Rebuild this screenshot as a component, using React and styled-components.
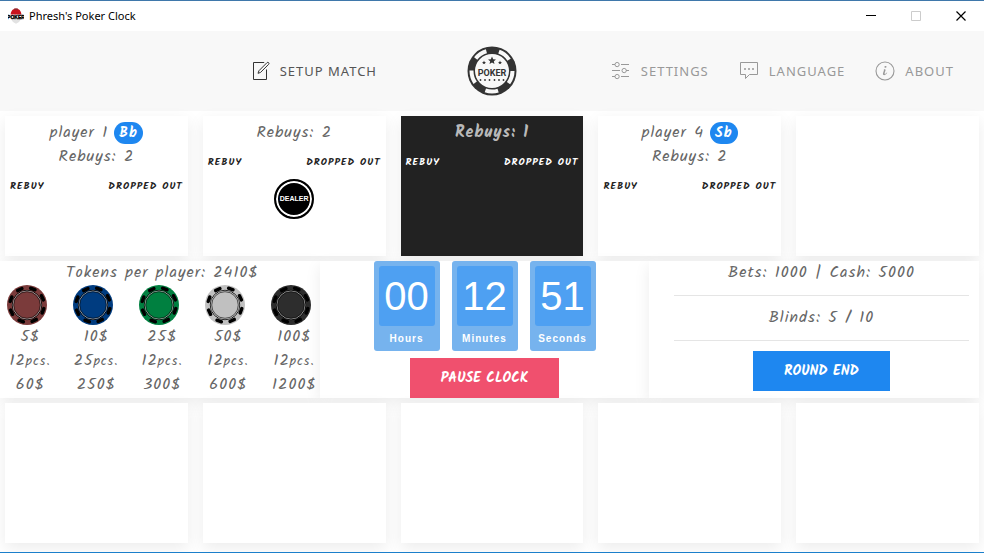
import React from "react";
import styled, { createGlobalStyle, css } from "styled-components";

const script = `Kalam, Lato, "Open Sans", sans-serif`;
const sans = `"Liberation Sans", Arial, sans-serif`;
const ui = `"Segoe UI", "Noto Sans", "Open Sans", sans-serif`;

const GlobalStyle = createGlobalStyle`
  *, *::before, *::after { box-sizing: border-box; }
  body { margin: 0; background: #fff; overflow-x: hidden; }
  button { border: 0; padding: 0; margin: 0; background: none; cursor: pointer; }
`;

const Window = styled.div`
  min-height: 100vh;
  display: flex;
  flex-direction: column;
  border-top: 1px solid #3f78ab;
  border-bottom: 1px solid #1b7fcb;
  background: #fff;
  overflow: hidden;
`;

const TitleBar = styled.header`
  display: flex;
  align-items: center;
  height: 30px;
  padding-left: 8px;
  background: #fff;
`;

const WindowTitle = styled.h1`
  flex: 1;
  margin: 0 0 0 5px;
  font: 400 11px/16px ${ui};
  color: #000;
`;

const WindowButton = styled.button`
  width: 45px;
  height: 30px;
  display: grid;
  place-items: center;
  color: ${(p) => (p.disabled ? "#ccc" : "#000")};
`;

const NavBar = styled.nav`
  display: grid;
  grid-template-columns: 1fr auto 1fr;
  align-items: center;
  height: 80px;
  background: #f8f8f8;
`;

const NavGroup = styled.div`
  display: flex;
  justify-content: flex-end;
  gap: 30px;
  padding-right: ${(p) => (p.$beforeLogo ? 90 : 30)}px;
`;

const NavLink = styled.a`
  display: flex;
  align-items: center;
  gap: 10px;
  font: 400 13px/22px ${ui};
  letter-spacing: 1px;
  text-transform: uppercase;
  text-decoration: none;
  white-space: nowrap;
  color: ${(p) => (p.$active ? "#555" : "#999")};
  svg { color: ${(p) => (p.$active ? "#333" : "#999")}; }
`;

const Table = styled.main`
  flex: 1;
  display: flex;
  flex-direction: column;
  gap: 5px;
  padding: 5px 0 9px;
  font: 400 16px/24px ${script};
  letter-spacing: 1px;
  color: #666;
`;

const SeatRow = styled.section`
  display: grid;
  grid-template-columns: repeat(5, minmax(0, 1fr));
  gap: 15px;
  padding: 0 5px;
`;

const raised = css`
  background: #fff;
  box-shadow: 0 5px 15px rgba(0, 0, 0, 0.08);
`;

const Seat = styled.article`
  ${raised}
  min-height: 140px;
  padding: 5px;
  display: flex;
  flex-direction: column;
  align-items: center;
  ${(p) =>
    p.$current &&
    css`
      background: #222;
      color: rgba(255, 255, 255, 0.7);
      font-weight: 700;
    `}
`;

const SeatLine = styled.div`
  display: flex;
  align-items: center;
  gap: 6px;
  height: 24px;
`;

const Badge = styled.span`
  height: 22px;
  padding: 0 5px;
  border-radius: 11px;
  background: #1e87f0;
  color: #fff;
  font-size: 14px;
  font-weight: 700;
  line-height: 22px;
`;

const SeatActions = styled.div`
  align-self: stretch;
  display: flex;
  justify-content: space-between;
  height: 34px;
`;

const SeatButton = styled.button`
  font: 700 10px/24px ${script};
  letter-spacing: 1px;
  text-transform: uppercase;
  white-space: nowrap;
  color: ${(p) => (p.$current ? "#fff" : "#222")};
`;

const DealerChip = styled.div`
  width: 40px;
  height: 40px;
  display: grid;
  place-items: center;
  border: 2px solid #000;
  border-radius: 50%;
  background: #000;
  box-shadow: inset 0 0 0 2px #fff;
  color: #fff;
  font: 700 7px/10px ${sans};
  letter-spacing: normal;
`;

const Middle = styled.section`
  display: grid;
  grid-template-columns: minmax(0, 320fr) minmax(0, 329fr) minmax(0, 330fr);
  padding-right: 5px;
`;

const Panel = styled.section`
  ${raised}
  min-height: 137px;
`;

const PanelTitle = styled.h2`
  margin: 0;
  padding-left: 4px;
  font: 400 16px/24px ${script};
  text-align: center;
`;

const TokenGrid = styled.div`
  display: grid;
  grid-template-columns: repeat(5, minmax(0, 1fr));
  gap: 20px;
  padding: 0 3px 0 7px;
`;

const Token = styled.div`
  display: flex;
  flex-direction: column;
  align-items: center;
  white-space: nowrap;
  svg { align-self: flex-start; }
  small { font-size: 13px; line-height: 1; }
`;

const ClockPanel = styled(Panel)`
  display: flex;
  flex-direction: column;
  align-items: center;
  gap: 7px;
`;

const ClockFace = styled.div`
  display: flex;
  gap: 12px;
`;

const ClockUnit = styled.div`
  width: 66px;
  height: 90px;
  padding: 5px;
  border-radius: 3px;
  background: #76b3ee;
  color: #fff;
  text-align: center;
  font: 700 10px/25px ${sans};
  letter-spacing: 1px;
`;

const ClockDigits = styled.div`
  border-radius: 3px;
  background: #4ea0f2;
  font: 400 40px/60px ${sans};
  letter-spacing: normal;
`;

const ActionButton = styled.button`
  height: 40px;
  padding: 0 31px;
  background: ${(p) => (p.$danger ? "#f0506e" : "#1e87f0")};
  color: #fff;
  font: 700 14px/38px ${script};
  text-transform: uppercase;
`;

const RoundPanel = styled(Panel)`
  padding: 0 10px 0 25px;
  text-align: center;
`;

const RoundLine = styled.p`
  margin: 0 0 10px;
  padding-bottom: 10px;
  border-bottom: 1px solid #e5e5e5;
`;

const Icon = ({ children }) => (
  <svg width="20" height="20" viewBox="0 0 20 20" fill="none" stroke="currentColor" aria-hidden="true">
    {children}
  </svg>
);

const EditIcon = () => (
  <Icon>
    <path d="M18.65,1.68 C18.41,1.45 18.109,1.33 17.81,1.33 C17.499,1.33 17.209,1.45 16.98,1.68 L8.92,9.76 L8,12.33 L10.55,11.41 L18.651,3.34 C19.12,2.87 19.12,2.15 18.65,1.68 Z" />
    <polyline points="16.5 8.482 16.5 18.5 3.5 18.5 3.5 1.5 14.211 1.5" />
  </Icon>
);

const SettingsIcon = () => (
  <Icon>
    <ellipse cx="6.11" cy="3.55" rx="2.11" ry="2.15" />
    <ellipse cx="6.11" cy="15.55" rx="2.11" ry="2.15" />
    <circle cx="13.15" cy="9.55" r="2.15" />
    <path d="M1 3.5h3M10 3.5h8M1 9.5h8M15 9.5h3M1 15.5h3M10 15.5h8" />
  </Icon>
);

const LanguageIcon = () => (
  <Icon>
    <polygon points="1.5,1.5 18.5,1.5 18.5,13.5 10.5,13.5 6.5,17.5 6.5,13.5 1.5,13.5" />
    <g fill="currentColor" stroke="none">
      <circle cx="6" cy="8" r="1" />
      <circle cx="10" cy="8" r="1" />
      <circle cx="14" cy="8" r="1" />
    </g>
  </Icon>
);

const AboutIcon = () => (
  <Icon>
    <path
      fill="currentColor"
      stroke="none"
      d="M12.13,11.59 C11.97,12.84 10.35,14.12 9.1,14.16 C6.17,14.2 9.89,9.46 8.74,8.37 C9.3,8.16 10.62,7.83 10.62,8.81 C10.62,9.63 10.12,10.55 9.88,11.32 C8.66,15.16 12.13,11.15 12.14,11.18 C12.16,11.21 12.16,11.35 12.13,11.59 Z M11.56,5.67 C11.56,6.67 9.36,7.15 9.36,6.03 C9.36,5 11.56,4.54 11.56,5.67 Z"
    />
    <circle cx="10" cy="10" r="9" strokeWidth="1.1" />
  </Icon>
);

const AppIcon = () => (
  <svg width="16" height="16" viewBox="0 0 16 16" aria-hidden="true">
    <path d="M2.5 6.500C3 2.500 5 .5 8 .5S13 2.500 13.500 6.500z" fill="#c8141e" />
    <path d="M6 .5h4l-.6 1.500h-2.800z" fill="#8b2a2e" />
    <path d="M2.500 10.500h11l-2.500 3.500-3 1.700-3-1.700z" fill="#e2e2e2" />
    <text x="8" y="11" textAnchor="middle" fontFamily="Liberation Sans, sans-serif" fontWeight="700" fontSize="5" fill="#000" stroke="#000" strokeWidth="0.400">POKER</text>
  </svg>
);

const star = "M0-1 .29-.31 1-.25.46.21.62.9 0 .52-.62.9-.46.21-1-.25-.29-.31z";

const Logo = () => (
  <svg width="50" height="50" viewBox="0 0 50 50" role="img" aria-label="Poker">
    <circle cx="25" cy="25" r="24.500" fill="#333" />
    <circle cx="25" cy="25" r="20.500" fill="none" stroke="#f8f8f8" strokeWidth="4" strokeDasharray="13 12.761" />
    <circle cx="25" cy="25" r="17" fill="#f8f8f8" />
    <g fill="#333">
      <path d={star} transform="translate(25 14.500) scale(4)" />
      <path d={star} transform="translate(17 16.500) scale(2)" />
      <path d={star} transform="translate(33 16.500) scale(2)" />
      {[13.5, 18, 22.5, 27.5, 32, 36.5].map((x) => (
        <circle key={x} cx={x} cy="34" r="0.900" />
      ))}
      <text x="25" y="29.500" textAnchor="middle" fontFamily="Roboto, sans-serif" fontWeight="700" fontSize="9">POKER</text>
    </g>
  </svg>
);

const Chip = ({ color }) => (
  <svg width="40" height="40" viewBox="0 0 40 40" aria-hidden="true">
    <circle cx="20" cy="20" r="20" fill={color} />
    {[20, 65, 110, 155, 200, 245, 290, 335].map((a) => (
      <rect key={a} x="16" y="1.300" width="8" height="3.400" rx="1.500" fill="#000" transform={`rotate(${a} 20 20)`} />
    ))}
    <circle cx="20" cy="20" r="14.700" fill={color} stroke="#000" strokeWidth="1" />
    <circle cx="20" cy="20" r="14" fill="none" stroke="#d0d0d0" strokeWidth="0.700" />
    <circle cx="20" cy="20" r="13.300" fill="none" stroke="#000" strokeWidth="0.600" />
  </svg>
);

const topSeats = [
  { name: "player 1", badge: "Bb", rebuys: 2 },
  { rebuys: 2, dealer: true },
  { rebuys: 1, current: true },
  { name: "player 4", badge: "Sb", rebuys: 2 },
  {},
];

const tokens = [
  { color: "#7b3b3b", value: "5$", count: 12, total: "60$" },
  { color: "#003c80", value: "10$", count: 25, total: "250$" },
  { color: "#008040", value: "25$", count: 12, total: "300$" },
  { color: "#c0c0c0", value: "50$", count: 12, total: "600$" },
  { color: "#2d2d2d", value: "100$", count: 12, total: "1200$" },
];

const clock = [
  ["00", "Hours"],
  ["12", "Minutes"],
  ["51", "Seconds"],
];

function PlayerSeat({ name, badge, rebuys, dealer, current }) {
  return (
    <Seat $current={current}>
      {name && (
        <SeatLine>
          {name}
          <Badge>{badge}</Badge>
        </SeatLine>
      )}
      {rebuys && (
        <>
          <SeatLine>Rebuys: {rebuys}</SeatLine>
          <SeatActions>
            <SeatButton $current={current}>Rebuy</SeatButton>
            <SeatButton $current={current}>Dropped out</SeatButton>
          </SeatActions>
        </>
      )}
      {dealer && <DealerChip>DEALER</DealerChip>}
    </Seat>
  );
}

export default function App() {
  return (
    <Window>
      <GlobalStyle />
      <TitleBar>
        <AppIcon />
        <WindowTitle>Phresh's Poker Clock</WindowTitle>
        <WindowButton aria-label="Minimize">
          <svg width="11" height="11" viewBox="0 0 11 11" stroke="currentColor"><path d="M0 4.500h10" /></svg>
        </WindowButton>
        <WindowButton aria-label="Maximize" disabled>
          <svg width="11" height="11" viewBox="0 0 11 11" stroke="currentColor" fill="none"><path d="M.5.5h9v9h-9z" /></svg>
        </WindowButton>
        <WindowButton aria-label="Close">
          <svg width="11" height="11" viewBox="0 0 11 11" stroke="currentColor"><path d="M.5.5l9 9M9.500.5l-9 9" strokeWidth="1.200" /></svg>
        </WindowButton>
      </TitleBar>
      <NavBar>
        <NavGroup $beforeLogo>
          <NavLink href="#setup" $active><EditIcon />Setup match</NavLink>
        </NavGroup>
        <Logo />
        <NavGroup>
          <NavLink href="#settings"><SettingsIcon />Settings</NavLink>
          <NavLink href="#language"><LanguageIcon />Language</NavLink>
          <NavLink href="#about"><AboutIcon />About</NavLink>
        </NavGroup>
      </NavBar>
      <Table>
        <SeatRow>
          {topSeats.map((seat, i) => (
            <PlayerSeat key={i} {...seat} />
          ))}
        </SeatRow>
        <Middle>
          <Panel>
            <PanelTitle>Tokens per player: 2410$</PanelTitle>
            <TokenGrid>
              {tokens.map((t) => (
                <Token key={t.value}>
                  <Chip color={t.color} />
                  <span>{t.value}</span>
                  <span>{t.count}<small>pcs.</small></span>
                  <span>{t.total}</span>
                </Token>
              ))}
            </TokenGrid>
          </Panel>
          <ClockPanel>
            <ClockFace>
              {clock.map(([value, label]) => (
                <ClockUnit key={label}>
                  <ClockDigits>{value}</ClockDigits>
                  {label}
                </ClockUnit>
              ))}
            </ClockFace>
            <ActionButton $danger>Pause clock</ActionButton>
          </ClockPanel>
          <RoundPanel>
            <RoundLine>Bets: 1000 | Cash: 5000</RoundLine>
            <RoundLine>Blinds: 5 / 10</RoundLine>
            <ActionButton>Round end</ActionButton>
          </RoundPanel>
        </Middle>
        <SeatRow>
          {[0, 1, 2, 3, 4].map((i) => (
            <Seat key={i} />
          ))}
        </SeatRow>
      </Table>
    </Window>
  );
}
